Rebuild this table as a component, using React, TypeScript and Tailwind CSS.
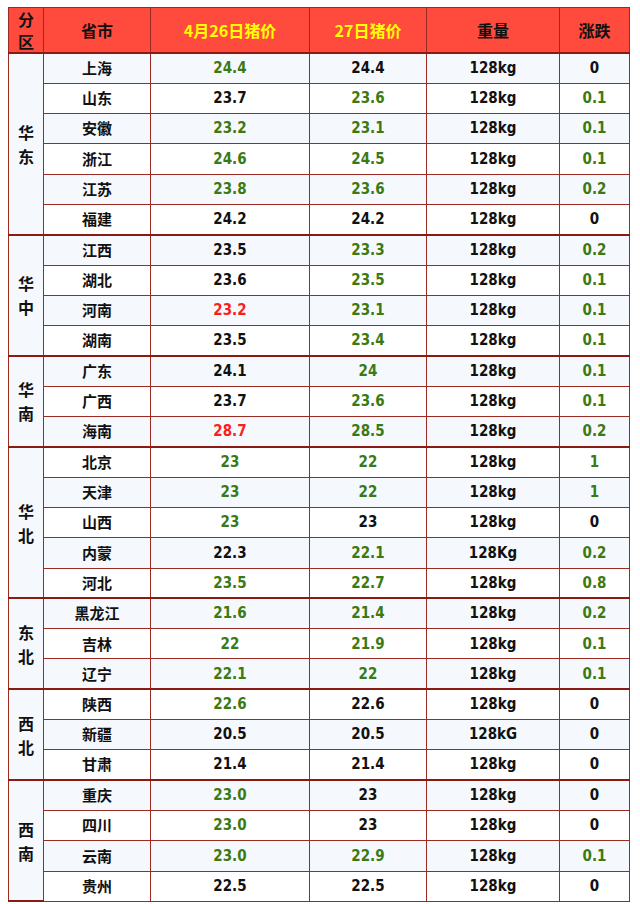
type C = 'g' | 'b' | 'r'

interface Row {
  name: string
  p1: string
  c1: C
  p2: string
  c2: C
  w: string
  d: string
  cd: C
}

const r = (name: string, p1: string, c1: C, p2: string, c2: C, d: string, cd: C, w = '128kg'): Row => ({ name, p1, c1, p2, c2, w, d, cd })

const groups: { region: string; rows: Row[] }[] = [
  {
    region: '华东',
    rows: [
      r('上海', '24.4', 'g', '24.4', 'b', '0', 'b'),
      r('山东', '23.7', 'b', '23.6', 'g', '0.1', 'g'),
      r('安徽', '23.2', 'g', '23.1', 'g', '0.1', 'g'),
      r('浙江', '24.6', 'g', '24.5', 'g', '0.1', 'g'),
      r('江苏', '23.8', 'g', '23.6', 'g', '0.2', 'g'),
      r('福建', '24.2', 'b', '24.2', 'b', '0', 'b'),
    ],
  },
  {
    region: '华中',
    rows: [
      r('江西', '23.5', 'b', '23.3', 'g', '0.2', 'g'),
      r('湖北', '23.6', 'b', '23.5', 'g', '0.1', 'g'),
      r('河南', '23.2', 'r', '23.1', 'g', '0.1', 'g'),
      r('湖南', '23.5', 'b', '23.4', 'g', '0.1', 'g'),
    ],
  },
  {
    region: '华南',
    rows: [
      r('广东', '24.1', 'b', '24', 'g', '0.1', 'g'),
      r('广西', '23.7', 'b', '23.6', 'g', '0.1', 'g'),
      r('海南', '28.7', 'r', '28.5', 'g', '0.2', 'g'),
    ],
  },
  {
    region: '华北',
    rows: [
      r('北京', '23', 'g', '22', 'g', '1', 'g'),
      r('天津', '23', 'g', '22', 'g', '1', 'g'),
      r('山西', '23', 'g', '23', 'b', '0', 'b'),
      r('内蒙', '22.3', 'b', '22.1', 'g', '0.2', 'g', '128Kg'),
      r('河北', '23.5', 'g', '22.7', 'g', '0.8', 'g'),
    ],
  },
  {
    region: '东北',
    rows: [
      r('黑龙江', '21.6', 'g', '21.4', 'g', '0.2', 'g'),
      r('吉林', '22', 'g', '21.9', 'g', '0.1', 'g'),
      r('辽宁', '22.1', 'g', '22', 'g', '0.1', 'g'),
    ],
  },
  {
    region: '西北',
    rows: [
      r('陕西', '22.6', 'g', '22.6', 'b', '0', 'b'),
      r('新疆', '20.5', 'b', '20.5', 'b', '0', 'b', '128kG'),
      r('甘肃', '21.4', 'b', '21.4', 'b', '0', 'b'),
    ],
  },
  {
    region: '西南',
    rows: [
      r('重庆', '23.0', 'g', '23', 'b', '0', 'b'),
      r('四川', '23.0', 'g', '23', 'b', '0', 'b'),
      r('云南', '23.0', 'g', '22.9', 'g', '0.1', 'g'),
      r('贵州', '22.5', 'b', '22.5', 'b', '0', 'b'),
    ],
  },
]

const color = (c: C) => (c === 'g' ? 'text-[#3b7a12]' : c === 'r' ? 'text-[#ff1c1c]' : 'text-[#111111]')

const cell = 'border border-[#9a2a22] text-center align-middle p-0'

export default function App() {
  let idx = 0
  return (
    <div className="bg-white w-[640px] h-[904px] pt-[7px] pl-[8px] font-['DejaVu_Sans_Condensed','DejaVu_Sans','Noto_Sans_CJK_SC',sans-serif] font-bold">
      <table className="border-collapse border border-[#8b1a12] w-[621px] table-fixed">
        <colgroup>
          <col className="w-[35px]" />
          <col className="w-[107px]" />
          <col className="w-[159px]" />
          <col className="w-[117px]" />
          <col className="w-[133px]" />
          <col className="w-[70px]" />
        </colgroup>
        <thead>
          <tr className="h-[45px] bg-[#ff4a3e] text-[16px] font-['Noto_Sans_CJK_SC',sans-serif]">
            <th className={`${cell} text-[#111]`}>
              <div className="flex flex-col items-center leading-[22px]">
                <span>分</span>
                <span>区</span>
              </div>
            </th>
            <th className={`${cell} text-[#111]`}>省市</th>
            <th className={`${cell} text-[#ffff00]`}>4月26日猪价</th>
            <th className={`${cell} text-[#ffff00]`}>27日猪价</th>
            <th className={`${cell} text-[#111]`}>重量</th>
            <th className={`${cell} text-[#111]`}>涨跌</th>
          </tr>
        </thead>
        <tbody className="text-[15px]">
          {groups.map(g =>
            g.rows.map((row, i) => {
              const stripe = idx++ % 2 === 0 ? 'bg-[#f5f9fe]' : 'bg-white'
              return (
                <tr key={row.name} className={`h-[30.3px] ${stripe} ${i === 0 ? 'border-t-2 border-t-[#8b1a12]' : ''}`}>
                  {i === 0 && (
                    <td
                      rowSpan={g.rows.length}
                      className={`${cell} bg-[#f5f9fe] text-[16px] text-[#111] font-['Noto_Sans_CJK_SC',sans-serif] border-b-2 border-b-[#8b1a12]`}
                    >
                      <div className="flex flex-col items-center leading-[24px]">
                        <span>{g.region[0]}</span>
                        <span>{g.region[1]}</span>
                      </div>
                    </td>
                  )}
                  <td className={`${cell} text-[#111] font-['Noto_Sans_CJK_SC',sans-serif]`}>{row.name}</td>
                  <td className={`${cell} ${color(row.c1)}`}>{row.p1}</td>
                  <td className={`${cell} ${color(row.c2)}`}>{row.p2}</td>
                  <td className={`${cell} text-[#111]`}>{row.w}</td>
                  <td className={`${cell} ${color(row.cd)}`}>{row.d}</td>
                </tr>
              )
            })
          )}
        </tbody>
      </table>
    </div>
  )
}
